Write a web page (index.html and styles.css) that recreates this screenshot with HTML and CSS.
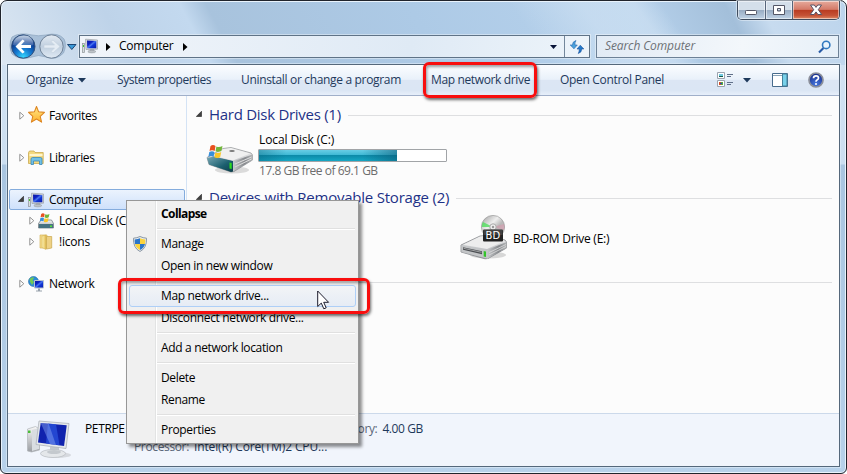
FILE: index.html
```html
<!DOCTYPE html>
<html lang="en">
<head>
<meta charset="utf-8">
<title>Computer</title>
<link rel="stylesheet" href="styles.css">
</head>
<body>
<svg class="defs" width="0" height="0">
  <defs>
    <linearGradient id="screen" x1="0" y1="0" x2="1" y2="1"><stop offset="0" stop-color="#0a1aa0"/><stop offset=".35" stop-color="#0c20c4"/><stop offset=".5" stop-color="#4a76ee"/><stop offset=".62" stop-color="#1238d8"/><stop offset="1" stop-color="#0718a8"/></linearGradient>
    <linearGradient id="metal" x1="0" y1="0" x2="0" y2="1"><stop offset="0" stop-color="#f8f8f8"/><stop offset="1" stop-color="#9a9da2"/></linearGradient>
    <linearGradient id="metalSide" x1="0" y1="0" x2="1" y2="0"><stop offset="0" stop-color="#c8cacc"/><stop offset=".6" stop-color="#85888c"/><stop offset="1" stop-color="#b4b6b8"/></linearGradient>
    <linearGradient id="teal" x1="0" y1="0" x2="1" y2="1"><stop offset="0" stop-color="#7aa9b5"/><stop offset=".6" stop-color="#1c6070"/><stop offset="1" stop-color="#0c3d49"/></linearGradient>
    <radialGradient id="backFill" cx=".5" cy=".95" r=".9"><stop offset="0" stop-color="#35d8ff"/><stop offset=".4" stop-color="#1478d0"/><stop offset=".75" stop-color="#0c3c90"/><stop offset="1" stop-color="#32609f"/></radialGradient>
    <linearGradient id="gloss" x1="0" y1="0" x2="0" y2="1"><stop offset="0" stop-color="#fff" stop-opacity=".7"/><stop offset="1" stop-color="#fff" stop-opacity=".12"/></linearGradient>
    <linearGradient id="fwd" x1="0" y1="0" x2="0" y2="1"><stop offset="0" stop-color="#e4ebf3"/><stop offset=".5" stop-color="#c0cfdf"/><stop offset="1" stop-color="#e0eaf4"/></linearGradient>
    <linearGradient id="gold" x1="0" y1="0" x2="1" y2="0"><stop offset="0" stop-color="#fdf2b4"/><stop offset="1" stop-color="#e3bd55"/></linearGradient>
    <linearGradient id="star" x1="0" y1="0" x2="0" y2="1"><stop offset="0" stop-color="#ffe88a"/><stop offset="1" stop-color="#ffb22c"/></linearGradient>
    <linearGradient id="disc" x1="0" y1="0" x2="1" y2="1"><stop offset="0" stop-color="#999"/><stop offset=".4" stop-color="#efefef"/><stop offset=".6" stop-color="#b8b8b8"/><stop offset="1" stop-color="#ddd"/></linearGradient>
    <radialGradient id="help" cx=".5" cy=".8" r=".8"><stop offset="0" stop-color="#4778e0"/><stop offset="1" stop-color="#152a86"/></radialGradient>
    <symbol id="pc" viewBox="0 0 16 16">
      <rect x=".5" y="5.500" width="2" height="9" fill="#d8dde0" stroke="#8d9498" stroke-width=".7"/><rect x="1" y="7" width="1" height="2" fill="#42c72c"/>
      <path d="M3.500 1.200L15.500 2v9.200L4 11.500z" fill="#d3d6da" stroke="#9ba1a8" stroke-width=".7"/><path d="M5 2.500l9.300.5v7.200L5.200 10.300z" fill="url(#screen)"/>
      <path d="M8 11h4v2H8z" fill="#a3a9b0"/><ellipse cx="9.800" cy="13.600" rx="4" ry="1.300" fill="#bdc2c7" stroke="#8f969c" stroke-width=".5"/>
    </symbol>
    <symbol id="flag" viewBox="0 0 16 16">
      <path d="M2.500 2Q5 0 7.500 2L6.700 7Q4 5.500 1.500 7z" fill="#e8511f"/><path d="M8.400 2.400Q11 4 14.500 2L13.400 7Q11 8.500 7.500 7.300z" fill="#72b63a"/><path d="M1.300 8Q4 6.500 6.500 8L5.500 13Q3 11 .3 13z" fill="#388fda"/><path d="M7.400 8.400Q10 10 13.200 8L12.200 13Q9.500 15 6.400 13.300z" fill="#fbc728"/>
    </symbol>
    <symbol id="closed" viewBox="0 0 6 10"><path d="M.8 1.200v7l4-3.500z" fill="#fff" stroke="#929292"/></symbol>
    <symbol id="open" viewBox="0 0 6 6"><path d="M5.500.3v5.200H.3z" fill="#404040" stroke="#202020" stroke-width=".6"/></symbol>
  </defs>
</svg>

<div class="window">
  <header class="titlebar">
    <div class="controls">
      <span class="ctl"><svg width="13" height="6"><rect x=".5" y=".5" width="11" height="4" rx=".8" fill="#fff" stroke="#535666"/></svg></span>
      <span class="ctl"><svg width="12" height="10"><path fill-rule="evenodd" d="M.5.5h11v9H.5zM4.500 3.500h3v2.500h-3z" fill="#fff" stroke="#535666"/></svg></span>
      <span class="ctl close"><svg width="14" height="12" viewBox="0 0 14 12"><path d="M1.500 1h3.800L7 3.400 8.700 1h3.800L9.300 5.700l3.400 4.800H8.900L7 7.900l-1.900 2.600H1.300l3.400-4.800z" fill="#fff" stroke="#575264"/></svg></span>
    </div>
  </header>

  <div class="navbar">
    <svg class="travel" width="70" height="28" viewBox="0 0 70 28">
      <path d="M4 4Q12-1 24 2 30 3.500 38 2 50-1 56 6q3 6-.5 14Q48 28 38 24 30 21 24 24 12 28 4 21 0 12 4 4z" fill="#a9c0d8" stroke="#8ba3bd" stroke-width=".7"/>
      <circle cx="15.300" cy="13.500" r="11.700" fill="url(#backFill)" stroke="#34527c"/>
      <path d="M5 12Q5.500 3 15.300 2.500T25.500 12Q15 15 5 12z" fill="url(#gloss)"/>
      <path d="M7.500 13.500L14.500 6.500l2.200 1.500-3.600 3.900H23v3.200h-9.900l3.600 3.900-2.200 1.500z" fill="#fff"/>
      <circle cx="43.500" cy="13.500" r="11.700" fill="url(#fwd)" stroke="#6f8298"/>
      <path d="M52 13.500L45 7l-2 1.500 3.500 3.500H36v3h10.500L43 18.500l2 1.500z" fill="#e4ecf4" stroke="#c3d0de" stroke-width=".6"/>
      <path d="M59.500 11.500h8.500l-4.200 5z" fill="#3a9ad9" stroke="#1d4675"/>
    </svg>
    <div class="address">
      <svg class="i16"><use href="#pc"/></svg>
      <svg class="crumb" width="5" height="8"><path d="M0 0v8l4.500-4z"/></svg>
      <span class="crumb-name">Computer</span>
      <svg class="crumb2" width="5" height="8"><path d="M0 0v8l4.500-4z"/></svg>
      <svg class="drop" width="8" height="4"><path d="M0 0h7L3.500 4z" fill="#081438"/></svg>
      <span class="refresh"><svg width="16" height="14" viewBox="0 0 16 14"><path d="M7 .5Q3.300 1.500 3.500 5H1.200L5 8.800 8.300 5H6Q5.700 2.500 7 .5z" fill="#4ba1dc" stroke="#2567ad" stroke-width=".6"/><path d="M9.300 13.500q3.500-1 3.300-4.500h2.200L11.300 5.200 8 9h2.300q0 2.500-1 4.500z" fill="#2479c9" stroke="#1b539c" stroke-width=".6"/></svg></span>
    </div>
    <div class="search"><span>Search Computer</span>
      <svg width="14" height="14" viewBox="0 0 14 14"><path d="M5.500 8L1 12.500" stroke="#285ba6" stroke-width="2.200"/><circle cx="8.200" cy="4.900" r="3.700" fill="#e9f4fd" stroke="#3179c0" stroke-width="1.600"/></svg></div>
  </div>

  <div class="client">
    <div class="toolbar">
      <span class="t-org">Organize</span>
      <svg class="tri" width="9" height="5"><path d="M0 0h8L4 4.500z" fill="#1e395b"/></svg>
      <span class="t-sys">System properties</span>
      <span class="t-uni">Uninstall or change a program</span>
      <span class="t-map">Map network drive</span>
      <span class="t-ctl">Open Control Panel</span>
      <svg class="view" width="16" height="16"><path d="M.5.500h7v6h-7zM.5 8.500h7v6h-7z" fill="#fff" stroke="#9ba3ae"/><path d="M2 2h4v2H2z" fill="#70c9e3"/><path d="M2 4h4v1H2z" fill="#155a46"/><path d="M2 10h2v3H2z" fill="#d24b27"/><path d="M4 10h2v3H4z" fill="#5aaa3c"/><path d="M3 11h2v1H3z" fill="#224fb2"/><path d="M10 2.500h6M10 4.500h4M10 10.500h6M10 12.500h4" stroke="#617089"/></svg>
      <svg class="tri2" width="8" height="5"><path d="M0 0h8L4 4.500z" fill="#1e395b"/></svg>
      <svg class="pane" width="16" height="14"><path d="M.5.500h15v13H.5z" fill="#fff" stroke="#476b8c"/><path d="M1 2.500h9" stroke="#8aa4b9"/><path d="M10.500 1h4.500v12h-4.500z" fill="#78d1ea" stroke="#43819b"/></svg>
      <svg class="help" width="16" height="16" viewBox="0 0 16 16"><circle cx="8" cy="8" r="7" fill="url(#help)" stroke="#8b8f9a" stroke-width="1.700"/><path d="M5.500 6.200Q5.500 3.800 8 3.800T10.500 6Q10.500 7.200 9 8 8 8.500 8 9.700" fill="none" stroke="#fff" stroke-width="1.700"/><circle cx="8" cy="11.900" r="1" fill="#fff"/></svg>
    </div>

    <div class="body">
      <nav class="tree">
        <div class="row"><svg class="exp"><use href="#closed"/></svg><svg class="i16 fav" viewBox="0 0 16 16"><path d="M8 .5l2 5 5.500.500-4 3.700 1.300 5.500L8 12.300l-4.800 2.900 1.300-5.500L.5 6 6 5.500z" fill="url(#star)" stroke="#dd8520" stroke-linejoin="round"/></svg><span>Favorites</span></div>
        <div class="row gap"><svg class="exp"><use href="#closed"/></svg><svg class="i16" viewBox="0 0 16 16"><path d="M.5 2.500L1.500 1h4.500l1 1.500h8.200V13.500H.5z" fill="#f3d980" stroke="#c9a94f" stroke-width=".8"/><path d="M1.500 4h13v2h-13z" fill="#fff5cc"/><path d="M3 14.500V9Q3.200 7.500 4.500 7.500h8Q14 7.500 14 9v5.500h-2.500v-3.500h-6v3.500z" fill="#70c0e6" stroke="#3a88b8" stroke-width=".8"/></svg><span>Libraries</span></div>
        <div class="row gap selected"><svg class="exp open"><use href="#open"/></svg><svg class="i16"><use href="#pc"/></svg><span>Computer</span></div>
        <div class="row child"><svg class="exp"><use href="#closed"/></svg><svg class="i16" viewBox="0 0 16 16"><path d="M.5 10.500L3 7h10.500l2 3.500V15H.5z" fill="url(#metal)" stroke="#65727a" stroke-width=".7"/><path d="M1 11h14v4H1z" fill="#477281"/><path d="M12 12.500h2V14h-2z" fill="#57e23b"/><use href="#flag" x="1.500" y="-.5" width="11" height="11"/></svg><span>Local Disk (C:)</span></div>
        <div class="row child"><svg class="exp"><use href="#closed"/></svg><svg class="i16" viewBox="0 0 16 16"><path d="M2 1h7v13H2z" fill="#f6dc8a" stroke="#d5b45c" stroke-width=".7"/><path d="M4 2l4-1v14.500l-4-2z" fill="url(#gold)" stroke="#cfac4c" stroke-width=".5"/><path d="M8.500 2.500h5.200V14L8.500 15z" fill="#eed185" stroke="#caa64b" stroke-width=".7"/></svg><span>!icons</span></div>
        <div class="row gap"><svg class="exp"><use href="#closed"/></svg><svg class="i16" viewBox="0 0 16 16"><circle cx="5.500" cy="5.500" r="5" fill="#2d8ed6" stroke="#276da8" stroke-width=".6"/><path d="M1.500 3Q5 0 6 2L4.500 4 6 6 4 9Q1.500 6 1.500 3z" fill="#73ca55"/><path d="M6.500 4.500h9v7.500h-9z" fill="url(#screen)" stroke="#b8c3d0"/><path d="M10 12.500h2v2h2v1H8v-1h2z" fill="#98a1ac"/></svg><span>Network</span></div>
      </nav>

      <main class="list">
        <h2><svg class="tw"><use href="#open"/></svg><span class="h-hdd">Hard Disk Drives (1)</span></h2>
        <div class="drive">
          <svg width="48" height="32" viewBox="0 0 48 32">
            <ellipse cx="26" cy="25" rx="17" ry="3.500" fill="#777" opacity=".25"/>
            <path d="M1 12.500L17 3.500 25 2.500 45 8 46.500 10v5L28 26.500l-3 .5L3 19.500z" fill="url(#metal)" stroke="#8b8e91" stroke-width=".7"/>
            <path d="M27 16.500L46.500 9.500V15L27 26.500z" fill="url(#metalSide)"/>
            <path d="M1 13l7-1.500L27 16v10.500l-2 .5L3 19.500z" fill="url(#teal)"/>
            <path d="M17 4.500l8-1L44 8.500 27 15.500 8 11z" fill="#f0f0f0"/><path d="M29 19l16.500-7M29 22l16.500-8" stroke="#dedede" stroke-width="1"/>
            <ellipse cx="26" cy="6" rx="2.800" ry="1" fill="#777"/><path d="M23.500 17.500l2.200.5v6l-2.200-.6z" fill="#2edc1f"/>
            <use href="#flag" x="2" y="-1" width="16" height="16"/>
          </svg>
          <div class="info"><span class="d-name">Local Disk (C:)</span><div class="meter"><i></i></div><span class="d-free">17.8 GB free of 69.1 GB</span></div>
        </div>
        <h2 class="second"><svg class="tw"><use href="#open"/></svg><span class="h-rem">Devices with Removable Storage (2)</span></h2>
        <div class="rom">
          <svg width="48" height="48" viewBox="0 0 48 48">
            <ellipse cx="28" cy="40" rx="18" ry="3.500" fill="#555" opacity=".22"/>
            <path d="M1 30L20 21l6-.5L45 25l1.500 2v6L28 43.500l-3 .3L1 37z" fill="url(#metal)" stroke="#85888b" stroke-width=".8"/>
            <path d="M27 35l19.500-8v6L27 44z" fill="url(#metalSide)"/>
            <path d="M1.500 30l25.500 5v8.500L1.500 37z" fill="#c3c5c7"/>
            <path d="M3 32.300l19 4v3L3 34.800z" fill="#4b4e52"/><path d="M3.500 33.300l18 4" stroke="#d8d8d8" stroke-width=".6"/><path d="M23.700 36l2.300.5v5.500l-2.300-.6z" fill="#34c42a"/>
            <path d="M20 22l6-.8L44.500 26 27 34 3 29.700z" fill="#ededed"/>
            <path d="M29 37.500l17-8M29 40l17-8.500" stroke="#ddd" stroke-width=".8"/>
            <circle cx="33" cy="12" r="11.600" fill="url(#disc)" stroke="#999" stroke-width=".7"/>
            <path d="M33 12L23 7q-1.500 2-1.200 5z" fill="#52de5f" opacity=".8"/><path d="M33 12L44 9q1 3 0 6z" fill="#da8fa7" opacity=".5"/>
            <circle cx="33" cy="12" r="3.200" fill="#eee" stroke="#aaa"/><circle cx="33" cy="12" r="1.200" fill="#999"/>
            <rect x="23" y="14.500" width="20" height="12" rx="1" fill="#222"/><path d="M23.500 15h19v5h-19z" fill="#fff" opacity=".14"/>
            <text x="33" y="24" text-anchor="middle" class="bd">BD</text>
          </svg>
          <span>BD-ROM Drive (E:)</span>
        </div>
        <h2 class="third"></h2>
      </main>
    </div>

    <footer class="details">
      <svg width="46" height="42" viewBox="0 0 46 42">
        <ellipse cx="31" cy="36" rx="14" ry="3" fill="#888" opacity=".25"/>
        <path d="M1.500 10l8-2.500 4 2.500v21l-8 2-4-1z" fill="url(#metal)" stroke="#b0b4b9" stroke-width=".7"/><path d="M6 11l7-2v21l-7 2z" fill="#d9dde1"/><path d="M2 11.500h2.500v2.500H2z" fill="#49bd39"/>
        <path d="M24 28l9-.500v7H24z" fill="#c2c7cd"/><ellipse cx="27" cy="34.500" rx="12.500" ry="4" fill="#e4e7ea" stroke="#b7bcc1" stroke-width=".7"/><ellipse cx="28" cy="33" rx="7" ry="2" fill="#c4c9ce"/>
        <path d="M13 2l30 2.500-3 25L10 25.500z" fill="#e5e8eb" stroke="#adb3ba" stroke-width=".8"/><path d="M14.700 4l26 2.200-2.600 20.800L12 23.500z" fill="#1023ae"/><path d="M22 4.600l8 .7 3.500 21L20 24.600z" fill="#2c55e0" opacity=".7"/><path d="M14.700 4l8 .7L30 26 24 25z" fill="#8ba8f5" opacity=".45"/>
      </svg>
      <div class="meta">
        <div class="line"><span class="pc-name">PETRPE</span><span class="label">Memory:</span><span class="val">4.00 GB</span></div>
        <div class="line proc"><span class="label p-lab">Processor:</span><span class="val cpu">Intel(R) Core(TM)2 CPU...</span></div>
      </div>
    </footer>
  </div>
</div>

<div class="menu">
  <div class="item bold"><span>Collapse</span></div><hr>
  <div class="item"><svg width="16" height="16" viewBox="0 0 16 16"><path d="M8 .5Q11 2 14.500 2.200 15 12 8 15.500 1 12 1.500 2.200 5 2 8 .5z" fill="#e9edf1" stroke="#8b98a4"/><path d="M8 2.200V8H3Q2.600 6 2.700 3.500 6 3.300 8 2.200zM8 8h5Q12 12 8 14z" fill="#2b75c9"/><path d="M8 2.200V8h5q.4-2 .3-4.500Q10 3.300 8 2.200zM8 8H3q1 4 5 6z" fill="#fbd33d"/></svg><span>Manage</span></div>
  <div class="item"><span>Open in new window</span></div><hr>
  <div class="item hot"><span>Map network drive...</span></div>
  <div class="item"><span>Disconnect network drive...</span></div><hr>
  <div class="item"><span>Add a network location</span></div><hr>
  <div class="item"><span>Delete</span></div>
  <div class="item"><span>Rename</span></div><hr>
  <div class="item"><span>Properties</span></div>
</div>
<div class="mark mark-toolbar"></div>
<div class="mark mark-menu"></div>
<svg class="pointer" width="13" height="21" viewBox="0 0 13 21"><path d="M.7 1v15.500l3.600-3.400 2.500 5.700 2.400-1-2.500-5.500h4.900z" fill="#fff" stroke="#1c1c2c"/></svg>
</body>
</html>
```
FILE: styles.css
```css
* { box-sizing: border-box; }
body { margin: 0; width: 847px; height: 474px; overflow: hidden; background: #fff; font: 12px/16px "Open Sans", "Noto Sans", sans-serif; letter-spacing: -0.36px; color: #000; }
svg { display: block; flex: none; }
span { white-space: nowrap; }
.defs { position: absolute; }
.i16 { width: 16px; height: 16px; }

.window {
  width: 847px; height: 474px; padding: 0 6px 6px; border: 1px solid #20242c; border-radius: 7px 7px 6px 6px;
  box-shadow: inset 0 0 0 1px #e9f3fc;
  background:
    linear-gradient(55deg, transparent 0 62%, #d3e4f488 70% 76%, transparent 79%) 0 0 / 100% 64px no-repeat,
    linear-gradient(62deg, #dce7f2 0, #bed3e9 15%, #c3d9ef 24%, #a8c3dd 27%, #adcae6 50%, #b7d2ec 75%, #a3bfda 86%, #c7dbef 90%, #bcd4ec 100%) 0 0 / 100% 64px no-repeat,
    linear-gradient(#d6e5f4 0, #cbdef0 163px, #a9c5e0 164px, #b7d1ea 100%);
}
.titlebar { height: 34px; display: flex; justify-content: flex-end; }
.controls { display: flex; height: 19px; width: 103px; border: 1px solid #3f4c5e; border-top: 0; border-radius: 0 0 5px 5px; overflow: hidden; box-shadow: 0 0 0 1px #e2edf799; }
.ctl { width: 28px; display: flex; align-items: center; justify-content: center; border-right: 1px solid #56657a; background: linear-gradient(#d4dfea 0 48%, #97abc2 49%, #bfd2e5); box-shadow: inset 0 0 0 1px #ffffff80; }
.ctl:first-child svg { margin-top: 5px; }
.ctl:nth-child(2) { width: 27px; }
.ctl.close { flex: 1; border: 0; background: linear-gradient(#e6aa9c, #d47a68 47%, #b83a20 49%, #c55236 80%, #df8a66); }
.navbar { height: 29px; display: flex; align-items: flex-start; }
.travel { margin-left: 1px; margin-top: -2px; }
.address { width: 511px; height: 23px; margin-left: 1px; display: flex; align-items: center; border: 1px solid #5f7387; background: linear-gradient(100deg, #f1f5fa, #dfeaf5 65%, #edf4fa); box-shadow: 0 0 0 1px #ffffff60; padding-left: 2px; }
.address .i16 { margin-top: -2px; }
.crumb { margin-left: 8px; }
.crumb-name { width: 56px; margin-left: 8px; margin-top: -2px; letter-spacing: -.25px; }
.crumb2 { margin-left: 8px; }
.drop { margin-left: auto; }
.refresh { width: 25px; height: 21px; margin-left: 6px; border-left: 1px solid #73879b; display: flex; align-items: center; justify-content: center; }
.search { width: 243px; height: 23px; margin-left: 6px; display: flex; align-items: center; justify-content: space-between; padding: 0 6px 0 8px; border: 1px solid #6d8196; background: linear-gradient(100deg, #e2ebf5, #f3f7fb 60%, #e7f0f8); box-shadow: 0 0 0 1px #ffffff60; color: #6d7176; font-style: italic; letter-spacing: -.12px; }
.search span { margin-top: -2px; }

.client { height: 403px; width: 833px; border: 1px solid #55687b; background: #fcfcfc; box-shadow: 0 0 0 1px #e3effa90; }
.toolbar { height: 31px; display: flex; align-items: center; border-bottom: 1px solid #a0afc9; background: linear-gradient(#fbfdff, #e9f1fa 48%, #dce6f4 50%, #dbe6f4 85%, #e7effa); color: #1e395b; padding-left: 18px; }
.t-org { width: 52px; }
.tri { margin-right: 30px; }
.t-sys { width: 124px; letter-spacing: -.45px; }
.t-uni { width: 190px; letter-spacing: -.33px; }
.t-map { width: 129px; }
.t-ctl { width: 157px; letter-spacing: -.31px; }
.tri2 { margin-left: 10px; }
.pane { margin-left: 21px; }
.help { margin-left: 20px; }
.body { height: 317px; display: flex; }
.tree { width: 179px; border-right: 1px solid #d4e3f5; padding: 9px 1px 0; }
.row { height: 21px; display: flex; align-items: center; padding-left: 9px; border: 1px solid transparent; border-radius: 2px; }
.row span { margin-left: 5px; letter-spacing: -.33px; }
.row.gap { margin-top: 21px; }
.row.child { padding-left: 19px; }
.row.child span { letter-spacing: -.23px; }
.exp { width: 6px; height: 10px; margin-right: 3px; }
.exp.open { height: 6px; margin-top: -1px; margin-left: -1px; margin-right: 4px; }
.row .fav { width: 17px; height: 17px; margin: -2px -1px 0 0; }
.selected { border-color: #84acdd; background: linear-gradient(#ebf3fd, #cfe1fb); }
.list { flex: 1; padding: 9px 7px 0 9px; }
h2 { margin: 0; height: 20px; display: flex; align-items: center; color: #1e3287; font-size: 15px; font-weight: 400; letter-spacing: -.28px; }
h2 span { margin-top: -2px; }
h2::after { content: ""; flex: 1; height: 1px; background: #dedfe1; margin-left: 7px; }
.h-rem { letter-spacing: -.22px; }
.tw { width: 6px; height: 6px; margin: -2px 7px 0 0; }
.drive { height: 63px; display: flex; padding: 7px 0 0 10px; }
.drive > svg { margin-top: 13px; }
.info { margin-left: 4px; display: flex; flex-direction: column; }
.d-name { height: 17px; padding-left: 1px; letter-spacing: -.1px; }
.meter { width: 189px; height: 13px; border: 1px solid #a1a4a7; border-radius: 1px; background: #fff; }
.meter i { display: block; width: 138px; height: 11px; background: linear-gradient(90deg, #08627c66, transparent 20% 75%, #08526f88), linear-gradient(#68cde5, #3fb9d5 45%, #0d8ba9 50%, #16a7c4); }
.d-free { color: #6d6d6d; padding: 1px 0 0 1px; letter-spacing: -.48px; }
.rom { height: 64px; display: flex; padding: 7px 0 0 264px; }
.rom span { margin: 16px 0 0 5px; letter-spacing: -.24px; }
.bd { font: 10px "DejaVu Sans", sans-serif; letter-spacing: .2px; fill: #fff; }
.third { height: 20px; }
.third::after { margin-left: 0; }
.details { height: 53px; display: flex; border-top: 1px solid #ccd9ea; background: #f1f5fc; padding: 5px 0 0 18px; }
.meta { margin: 2px 0 0 13px; }
.line { display: flex; height: 18px; }
.label { color: #5a6779; }
.val { color: #1e395b; margin-left: 5px; letter-spacing: -.42px; }
.pc-name { width: 245px; }
.proc { padding-left: 49px; }
.cpu { letter-spacing: -.12px; }

.menu { position: absolute; left: 126px; top: 200px; width: 233px; height: 244px; padding: 2px; border: 1px solid #979797; background: linear-gradient(90deg, transparent 28px, #e2e3e3 28px 29px, #fff 29px 30px, transparent 30px), #f0f0f0; box-shadow: 3px 3px 3px #00000070; }
.item { height: 22px; display: flex; align-items: center; padding-left: 31px; border: 1px solid transparent; border-radius: 3px; }
.item svg { margin: 0 13px 0 -29px; }
.item span { letter-spacing: -.34px; }
.bold { font-weight: 700; }
.bold span { letter-spacing: -.6px; }
.hot { border-color: #aecff7; background: linear-gradient(#f2f4f6, #e6ecf5); }
hr { height: 2px; margin: 3px 1px 3px 28px; border: 0; border-top: 1px solid #e0e0e0; border-bottom: 1px solid #fff; }
.mark { position: absolute; border: 3px solid #f80e0e; border-radius: 6px; box-shadow: 1px 2px 3px #00000090, inset 1px 2px 3px #00000060; }
.mark-toolbar { left: 423px; top: 62px; width: 114px; height: 36px; }
.mark-menu { left: 118px; top: 278px; width: 252px; height: 36px; }
.pointer { position: absolute; left: 317px; top: 290px; }
```
